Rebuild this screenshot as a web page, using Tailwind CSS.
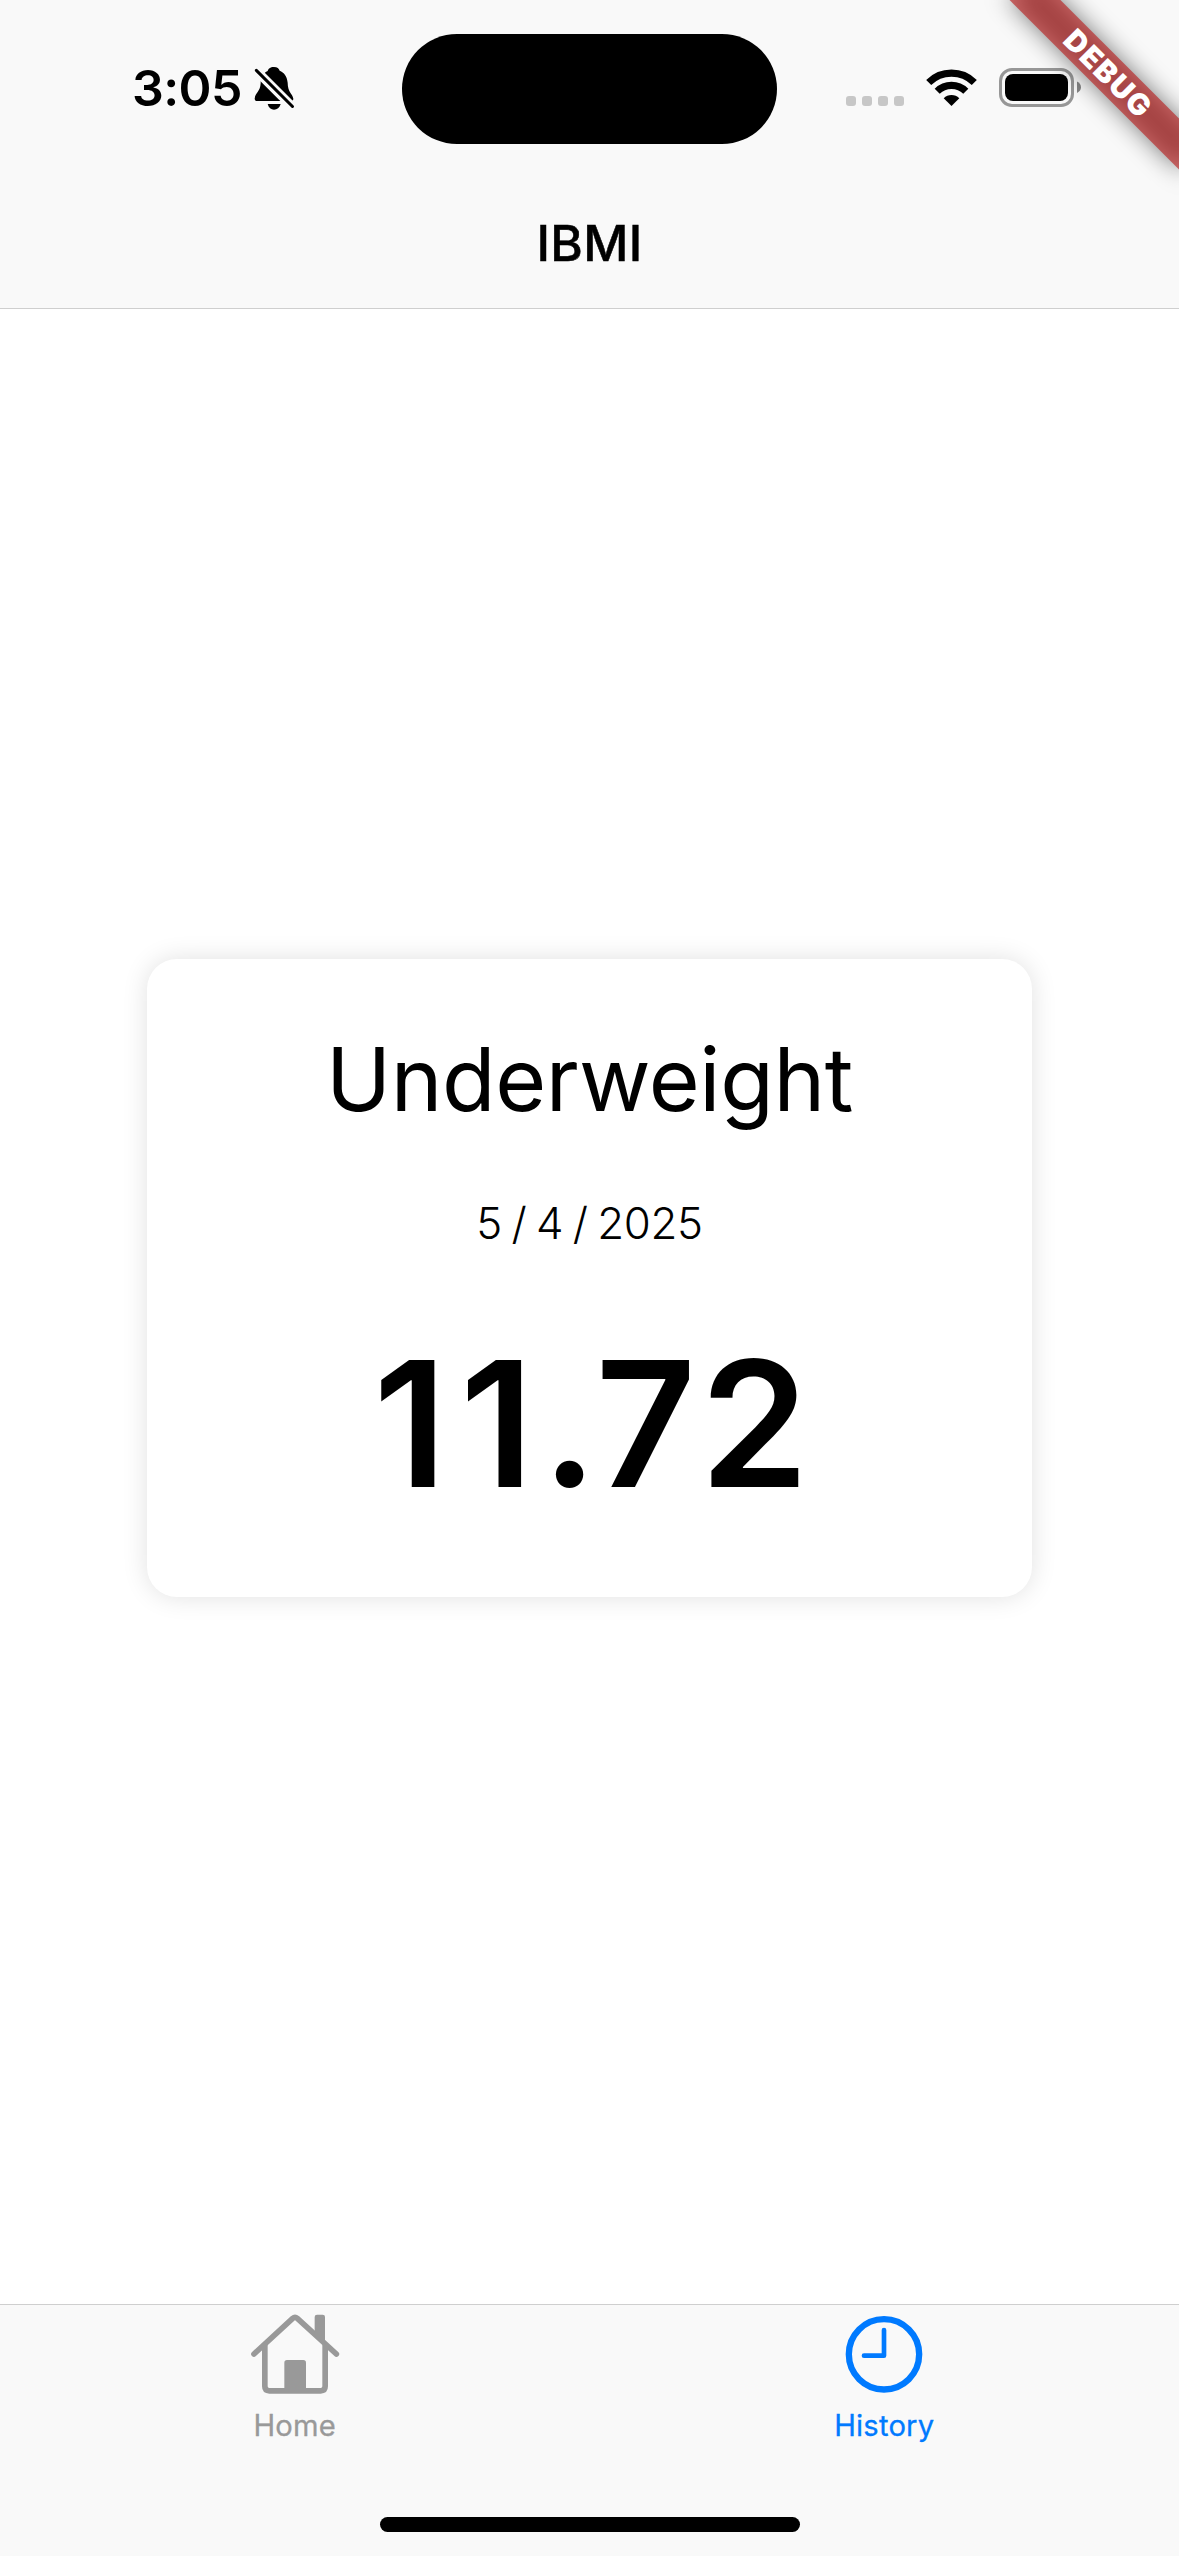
<!DOCTYPE html>
<html lang="en">
<head>
<meta charset="utf-8">
<title>IBMI</title>
<script src="https://cdn.jsdelivr.net/npm/@tailwindcss/browser@4"></script>
</head>
<body class="bg-white">
<div class="relative flex h-[2556px] w-[1179px] flex-col overflow-hidden bg-white font-['Inter',sans-serif] text-black">
  <header class="h-[309px] shrink-0 border-b border-[#cfcfcf] bg-[#f9f9f9]">
    <div class="flex h-[177px] items-start pt-[34px]">
      <div class="flex w-[402px] items-start pl-[132px] pt-[29px]">
        <span class="w-[121px] whitespace-nowrap text-[50px] leading-[50px] font-semibold tracking-[-0.6px]">3:05</span>
        <svg class="mt-[2px] h-[46px] w-[44px]" viewBox="429 75 132 138">
          <path d="M492 81C480 81 475 87 473 93C456 101 452 117 452 130C451 155 435 160 434 176Q434 183 442 183H542Q550 183 550 176C549 162 533 158 533 128C531 108 522 97 509 92C507 86 502 81 492 81Z"/>
          <path d="M473 192H512C509 203 501 209 492 209C483 209 476 203 473 192Z"/>
          <path d="M425 78L560 213" stroke="#f9f9f9" stroke-width="27"/>
          <path d="M439 91L547.500 199.500" stroke="#000" stroke-width="9" stroke-linecap="round"/>
        </svg>
      </div>
      <div class="h-[110px] w-[375px] rounded-full bg-black"></div>
      <div class="flex items-start pl-[69px]">
        <div class="mt-[62px] flex gap-[6px]">
          <i class="size-[10px] rounded-[3px] bg-[#c7c7c7]"></i>
          <i class="size-[10px] rounded-[3px] bg-[#c7c7c7]"></i>
          <i class="size-[10px] rounded-[3px] bg-[#c7c7c7]"></i>
          <i class="size-[10px] rounded-[3px] bg-[#c7c7c7]"></i>
        </div>
        <svg class="mt-[34px] ml-[21px] h-[40px] w-[53px]" viewBox="925 68 53 40" fill="none" stroke="#000" stroke-width="7.200">
          <path d="M928.700 82.500A32.500 32.500 0 0 1 974.300 82.500"/>
          <path d="M937.200 91.200A20.300 20.300 0 0 1 965.800 91.200"/>
          <path d="M951.500 106L943.700 98.200A11.200 11.200 0 0 1 959.300 98.200Z" fill="#000" stroke="none"/>
        </svg>
        <svg class="mt-[34px] ml-[21px] h-[39px] w-[83px]" viewBox="999 68 83 39">
          <rect x="1000.500" y="69.500" width="72" height="36" rx="11.500" fill="none" stroke="#979797" stroke-width="3"/>
          <rect x="1005" y="74" width="63" height="27" rx="8"/>
          <path d="M1077 81.500Q1081 83.500 1081 87.300Q1081 91 1077 93Z" fill="#858585"/>
        </svg>
      </div>
    </div>
    <h1 class="pt-px text-center text-[49.5px] leading-[131px] font-medium tracking-[0.3px] [-webkit-text-stroke:0.5px_black]">IBMI</h1>
  </header>

  <main class="flex-1 pt-[649.5px]">
    <section class="mx-auto flex h-[638.5px] w-3/4 flex-col items-center rounded-[30px] bg-white pt-[66.5px] shadow-[0_0_26px_rgba(0,0,0,0.12)]">
      <h2 class="text-[87.5px] leading-[108px] font-normal tracking-[-0.4px]">Underweight</h2>
      <p class="mt-[64px] text-[43.8px] leading-[54px] font-light tracking-[-0.3px] [word-spacing:-2.5px]">5 / 4 / 2025</p>
      <p class="mt-[64.5px] pl-[3px] text-[174.5px] leading-[216px] font-semibold"><span class="tracking-[13px]">1</span><span class="tracking-[8px]">1</span><span class="tracking-[-2px]">.</span><span class="tracking-[4px]">7</span>2</p>
    </section>
  </main>

  <nav class="grid h-[252px] shrink-0 grid-cols-2 border-t border-[#cfcfcf] bg-[#f9f9f9]">
    <a class="flex flex-col items-center text-[#999999]">
      <svg class="mt-[8px] h-[82px] w-[90px]" viewBox="89 69 270 246" fill="none" stroke="currentColor">
        <path d="M101 192L217 85Q224 79 231 85L348 192" stroke-width="17" stroke-linecap="round"/>
        <path d="M133.500 165V289Q133.500 302.500 147 302.500H301Q314.500 302.500 314.500 289V165" stroke-width="17"/>
        <path d="M283 135V81Q283 74 290 74H307Q314 74 314 81V163Z" fill="currentColor" stroke="none"/>
        <path d="M192 303V218Q192 210 200 210H249Q257 210 257 218V303Z" fill="currentColor" stroke="none"/>
      </svg>
      <span class="mt-[12px] text-[29.2px] leading-[38px] font-normal tracking-[0.2px] [-webkit-text-stroke:0.3px_currentColor]">Home</span>
    </a>
    <a class="flex flex-col items-center text-[#007aff]">
      <svg class="mt-[8px] h-[82px] w-[90px]" viewBox="88 69 270 246" fill="none" stroke="currentColor">
        <circle cx="223" cy="193" r="105.500" stroke-width="19"/>
        <path d="M223 120V197H163" stroke-width="14" stroke-linecap="round" stroke-linejoin="round"/>
      </svg>
      <span class="mt-[12px] text-[29.2px] leading-[38px] font-normal tracking-[0.2px] [-webkit-text-stroke:0.3px_currentColor]">History</span>
    </a>
  </nav>

  <!-- Home indicator -->
  <div class="absolute top-[2517px] left-[380px] h-[15px] w-[420px] rounded-full bg-black"></div>

  <!-- Corner ribbon -->
  <div class="absolute top-[54px] left-[987px] h-[36px] w-[240px] rotate-45">
    <div class="absolute inset-0 bg-black/50 blur-[12px]"></div>
    <div class="absolute inset-0 bg-[#b71c1c]/63 pl-[4px] text-center text-[29.7px] leading-[36px] font-black tracking-[1.5px] text-white">DEBUG</div>
  </div>
</div>
</body>
</html>
